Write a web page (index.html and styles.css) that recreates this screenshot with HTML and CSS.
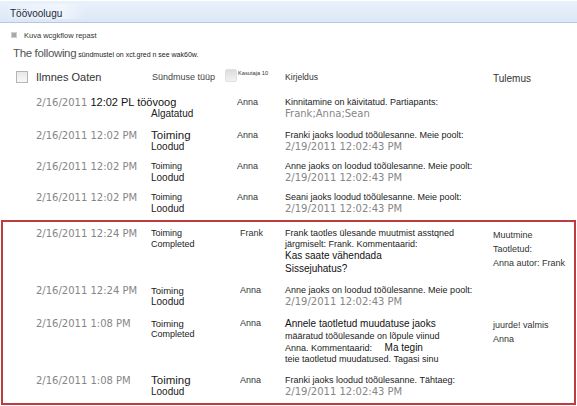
FILE: index.html
```html
<!DOCTYPE html>
<html lang="et">
<head>
  <meta charset="UTF-8">
  <title>Töövoolugu</title>
  <link rel="stylesheet" href="styles.css">
</head>
<body>
  <div class="titlebar"><span class="title">Töövoolugu</span></div>

  <div class="report-link"><span class="bullet"></span>Kuva wcgkflow repast</div>
  <div class="intro"><span class="intro-big">The following</span> sündmustel on xct.gred n see wak60w.</div>

  <div class="row head">
    <div class="cell"><span class="check"></span></div>
    <div class="cell col-date">Ilmnes Oaten</div>
    <div class="cell col-type">Sündmuse tüüp <span class="check soft"></span></div>
    <div class="cell col-user">Kasutaja 10</div>
    <div class="cell col-desc">Kirjeldus</div>
    <div class="cell col-result">Tulemus</div>
  </div>

  <div class="row first">
    <div class="cell"></div>
    <div class="cell date">2/16/2011 <span class="over">12:02 PL töövoog</span></div>
    <div class="cell type"><span class="line">&nbsp;</span><span class="line sub">Algatatud</span></div>
    <div class="cell user">Anna</div>
    <div class="cell desc"><span class="line">Kinnitamine on käivitatud. Partiapants:</span><span class="line grey">Frank;Anna;Sean</span></div>
    <div class="cell result"></div>
  </div>

  <div class="row">
    <div class="cell"></div>
    <div class="cell date">2/16/2011 12:02 PM</div>
    <div class="cell type"><span class="line big">Toiming</span><span class="line sub">Loodud</span></div>
    <div class="cell user">Anna</div>
    <div class="cell desc"><span class="line">Franki jaoks loodud töõülesanne. Meie poolt:</span><span class="line grey">2/19/2011 12:02:43 PM</span></div>
    <div class="cell result"></div>
  </div>

  <div class="row">
    <div class="cell"></div>
    <div class="cell date">2/16/2011 12:02 PM</div>
    <div class="cell type"><span class="line">Toiming</span><span class="line sub">Loodud</span></div>
    <div class="cell user">Anna</div>
    <div class="cell desc"><span class="line">Anne jaoks on loodud töõülesanne. Meie poolt:</span><span class="line grey">2/19/2011 12:02:43 PM</span></div>
    <div class="cell result"></div>
  </div>

  <div class="row">
    <div class="cell"></div>
    <div class="cell date">2/16/2011 12:02 PM</div>
    <div class="cell type"><span class="line">Toiming</span><span class="line sub">Loodud</span></div>
    <div class="cell user">Anna</div>
    <div class="cell desc"><span class="line">Seani jaoks loodud töõülesanne. Meie poolt:</span><span class="line grey">2/19/2011 12:02:43 PM</span></div>
    <div class="cell result"></div>
  </div>

  <div class="marked">
    <div class="row">
      <div class="cell"></div>
      <div class="cell date">2/16/2011 12:24 PM</div>
      <div class="cell type"><span class="line">Toiming</span><span class="line">Completed</span></div>
      <div class="cell user">Frank</div>
      <div class="cell desc">
        <span class="line">Frank taotles ülesande muutmist asstqned</span>
        <span class="line">järgmiselt: Frank. Kommentaarid:</span>
        <span class="line comment">Kas saate vähendada</span>
        <span class="line comment">Sissejuhatus?</span>
      </div>
      <div class="cell result"><span class="line">Muutmine</span><span class="line">Taotletud:</span><span class="line">Anna autor: Frank</span></div>
    </div>

    <div class="row">
      <div class="cell"></div>
      <div class="cell date">2/16/2011 12:24 PM</div>
      <div class="cell type"><span class="line mid">Toiming</span><span class="line sub">Loodud</span></div>
      <div class="cell user">Anna</div>
      <div class="cell desc"><span class="line">Anne jaoks on loodud töõülesanne. Meie poolt:</span><span class="line grey">2/19/2011 12:02:43 PM</span></div>
      <div class="cell result"></div>
    </div>

    <div class="row">
      <div class="cell"></div>
      <div class="cell date">2/16/2011 1:08 PM</div>
      <div class="cell type"><span class="line mid">Toiming</span><span class="line">Completed</span></div>
      <div class="cell user">Anna</div>
      <div class="cell desc">
        <span class="line comment">Annele taotletud muudatuse jaoks</span>
        <span class="line">määratud töõülesande on lõpule viinud</span>
        <span class="line">Anna. Kommentaarid: <span class="comment gap">Ma tegin</span></span>
        <span class="line">teie taotletud muudatused. Tagasi sinu</span>
      </div>
      <div class="cell result"><span class="line">juurde! valmis</span><span class="line">Anna</span></div>
    </div>

    <div class="row last">
      <div class="cell"></div>
      <div class="cell date">2/16/2011 1:08 PM</div>
      <div class="cell type"><span class="line big">Toiming</span><span class="line sub">Loodud</span></div>
      <div class="cell user">Anna</div>
      <div class="cell desc"><span class="line">Franki jaoks loodud töõülesanne. Tähtaeg:</span><span class="line grey">2/19/2011 12:02:43 PM</span></div>
      <div class="cell result"></div>
    </div>
  </div>
</body>
</html>
```

FILE: styles.css
```css
body {
  margin: 0;
  background-color: #fff;
  font-family: "Liberation Sans", Arial, sans-serif;
  color: #222;
  overflow: hidden;
}

.titlebar {
  height: 21px;
  margin-top: 1px;
  background: linear-gradient(to bottom, #e9f1fb, #dce8f7);
  border-bottom: 1px solid #b9c7dc;
  display: flex;
  align-items: center;
}

.title {
  margin-left: 8px;
  padding: 4px 24px 0 2px;
  font-size: 10px;
  color: #1e2a3a;
  background: linear-gradient(to right, rgba(255, 255, 255, 0.1), rgba(255, 255, 255, 0.45) 70%, rgba(255, 255, 255, 0));
}

.report-link {
  display: flex;
  align-items: center;
  height: 10px;
  margin: 7px 0 0 11px;
  font-size: 7.5px;
  color: #333;
}

.bullet {
  width: 4px;
  height: 4px;
  background-color: #a8a8a8;
  border: 1px solid #d0d0d0;
  margin-right: 7px;
}

.intro {
  height: 14px;
  line-height: 14px;
  margin: 6px 0 0 13px;
  font-size: 7px;
  color: #222;
}

.intro-big {
  font-size: 11.5px;
  letter-spacing: -0.35px;
  color: #555;
}

.row {
  display: grid;
  grid-template-columns: 36px 113px 88px 48px 208px 1fr;
  padding: 3px 0 5px;
}

.row.first {
  padding-bottom: 7px;
}

.marked .row {
  grid-template-columns: 33px 113px 88px 48px 208px 1fr;
  padding-bottom: 7px;
}

.marked .row.last {
  padding-bottom: 5px;
}

.row.head {
  height: 14px;
  margin: 10px 0 10px;
  padding: 0;
  align-items: center;
  white-space: nowrap;
}

.head .col-date {
  font-size: 11px;
  color: #333;
}

.head .col-type {
  font-size: 9px;
  color: #444;
  padding-left: 3px;
  display: flex;
  align-items: center;
}

.head .col-user {
  font-size: 5.7px;
  color: #333;
  align-self: start;
  padding-left: 1px;
}

.head .col-desc {
  font-size: 8.6px;
  color: #333;
}

.head .col-result {
  font-size: 10px;
  color: #333;
  padding-top: 3px;
}

.check {
  display: block;
  width: 10px;
  height: 10px;
  margin-left: 16px;
  border: 1px solid #b5b5b5;
  background: linear-gradient(to bottom, #e8e8e8, #f8f8f8);
}

.check.soft {
  display: inline-block;
  width: 11px;
  height: 11px;
  margin: -4px 0 0 10px;
  border: 1px solid #e0e0e0;
  border-radius: 2px;
  background: linear-gradient(to bottom, #dcdcdc, #f2f2f2);
}

.cell {
  min-width: 0;
}

.line {
  display: block;
  line-height: 11px;
  white-space: nowrap;
}

.date {
  font-family: "DejaVu Sans", Verdana, sans-serif;
  font-size: 10px;
  line-height: 11px;
  color: #868686;
  white-space: nowrap;
}

.over {
  font-family: "Liberation Sans", Arial, sans-serif;
  font-size: 11px;
  color: #111;
}

.type {
  font-size: 9px;
  color: #222;
  padding-left: 2px;
}

.type .line {
  line-height: 11px;
}

.type .big {
  font-size: 11.5px;
}

.type .mid {
  font-size: 9.5px;
}

.type .sub {
  font-size: 10px;
  line-height: 12px;
}

.user {
  font-size: 9px;
  color: #333;
  line-height: 11px;
}

.marked .user {
  padding-left: 3px;
}

.desc {
  font-size: 9px;
  color: #222;
}

.desc .grey {
  font-family: "DejaVu Sans", Verdana, sans-serif;
  font-size: 10px;
  color: #868686;
}

.comment {
  font-size: 10px;
  color: #111;
}

.desc .comment {
  line-height: 12.5px;
}

.gap {
  margin-left: 10px;
}

.result {
  font-size: 9px;
  color: #333;
}

.result .line {
  line-height: 14px;
}

.marked {
  margin: 0 1px;
  border: 2px solid #bf3b3e;
  padding-top: 3px;
}
```
